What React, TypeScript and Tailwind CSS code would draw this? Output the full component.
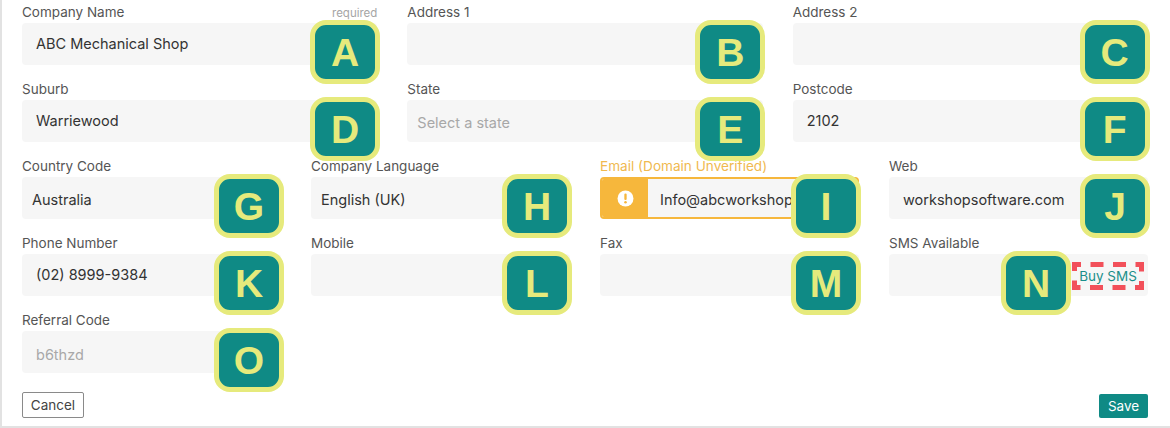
import React from 'react';

const font = { fontFamily: 'Inter, "Noto Sans", sans-serif' };

function Badge({ letter, className }: { letter: string; className: string }) {
  return (
    <div
      className={`absolute top-[-3px] flex h-[64px] w-[70px] items-center justify-center rounded-[16px] border-[5px] border-[#e6ea7c] bg-[#0f8a85] pt-[1px] font-['Liberation_Sans',sans-serif] text-[39px] leading-none font-bold text-[#e6ea7c] ${className}`}
    >
      {letter}
    </div>
  );
}

interface FieldProps {
  label: string;
  value?: string;
  muted?: boolean;
  letter: string;
  badgeClass: string;
  pad?: string;
  children?: React.ReactNode;
}

function Field({ label, value, muted, letter, badgeClass, pad = 'pl-[14px]', children }: FieldProps) {
  return (
    <div>
      <div className="flex h-[23px] items-center pt-[2px] text-[13.5px] text-[#555555]">{label}</div>
      <div className="relative">
        <div
          className={`flex h-[42px] items-center rounded-[4px] bg-[#f6f6f6] text-[14.5px] ${pad} ${muted ? 'text-[#a8a8a8]' : 'text-[#333333]'}`}
        >
          {value}
        </div>
        {children}
        <Badge letter={letter} className={badgeClass} />
      </div>
    </div>
  );
}

export default function App() {
  return (
    <div className="h-[428px] w-[1170px] overflow-hidden bg-white" style={font}>
      <div className="h-[428px] border-b-2 border-l-2 border-[#e2e2e2] pr-[22px] pl-[20px]">
        <div className="grid grid-cols-3 gap-x-[30px] gap-y-[12px]">
          <div className="relative">
            <Field label="Company Name" value="ABC Mechanical Shop" letter="A" badgeClass="left-[288px]" />
            <span className="absolute top-[5px] left-[310px] text-[11.5px] text-[#a5a5a5]">required</span>
          </div>
          <Field label="Address 1" letter="B" badgeClass="left-[288px]" />
          <Field label="Address 2" letter="C" badgeClass="left-[287px]" />
          <Field label="Suburb" value="Warriewood" letter="D" badgeClass="left-[288px]" />
          <Field label="State" value="Select a state" muted pad="pl-[10px] pt-[3px]" letter="E" badgeClass="left-[288px]" />
          <Field label="Postcode" value="2102" letter="F" badgeClass="left-[287px]" />
        </div>
        <div className="mt-[12px] grid grid-cols-4 gap-x-[30px] gap-y-[12px]">
          <Field label="Country Code" value="Australia" pad="pl-[10px] pt-[3px]" letter="G" badgeClass="left-[192px]" />
          <Field label="Company Language" value="English (UK)" pad="pl-[10px] pt-[3px]" letter="H" badgeClass="left-[191px]" />
          <div>
            <div className="flex h-[23px] items-center pt-[2px] text-[13.6px] text-[#f0b94f]">Email (Domain Unverified)</div>
            <div className="relative">
              <div className="flex h-[42px] items-stretch overflow-hidden rounded-[4px] border-2 border-[#f6b73c] bg-[#f6f6f6] text-[14.5px] text-[#333333]">
                <div className="flex w-[46px] items-center justify-center bg-[#f6b73c]">
                  <svg width="17" height="17" viewBox="0 0 16 16">
                    <circle cx="8" cy="8" r="7.5" fill="#ffffff" />
                    <rect x="6.9" y="3.4" width="2.2" height="6" rx="1" fill="#f6b73c" />
                    <circle cx="8" cy="11.5" r="1.2" fill="#f6b73c" />
                  </svg>
                </div>
                <div className="flex items-center pt-[3px] pl-[12px]">Info@abcworkshop</div>
              </div>
              <Badge letter="I" className="left-[191px]" />
            </div>
          </div>
          <Field label="Web" value="workshopsoftware.com" pad="pl-[14px] pt-[3px]" letter="J" badgeClass="left-[191px]" />
          <Field label="Phone Number" value="(02) 8999-9384" letter="K" badgeClass="left-[192px]" />
          <Field label="Mobile" letter="L" badgeClass="left-[191px]" />
          <Field label="Fax" letter="M" badgeClass="left-[191px]" />
          <Field label="SMS Available" letter="N" badgeClass="left-[112px]">
            <button className="absolute top-[8px] left-[183px] flex h-[28px] w-[72px] items-center justify-center text-[13.5px] whitespace-nowrap text-[#1a8f8a]">
              {/* annotation box, dashes meet at the corners */}
              <svg className="absolute inset-0" width="72" height="28" viewBox="0 0 72 28" fill="none">
                <rect x="2.5" y="2.5" width="67" height="23" stroke="#f2505a" strokeWidth="5" strokeDasharray="13 9.5" strokeDashoffset="6.5" />
              </svg>
              Buy SMS
            </button>
          </Field>
          <Field label="Referral Code" value="b6thzd" muted pad="pl-[14px] pt-[5px]" letter="O" badgeClass="left-[192px]" />
        </div>
        <div className="mt-[19px] flex items-end justify-between">
          <button className="h-[26px] w-[62px] rounded-[2px] border border-[#8a8a8a] text-[13.5px] text-[#444444]">
            Cancel
          </button>
          <button className="h-[24px] w-[49px] rounded-[2px] bg-[#0f8a85] text-[13.5px] text-white">Save</button>
        </div>
      </div>
    </div>
  );
}
